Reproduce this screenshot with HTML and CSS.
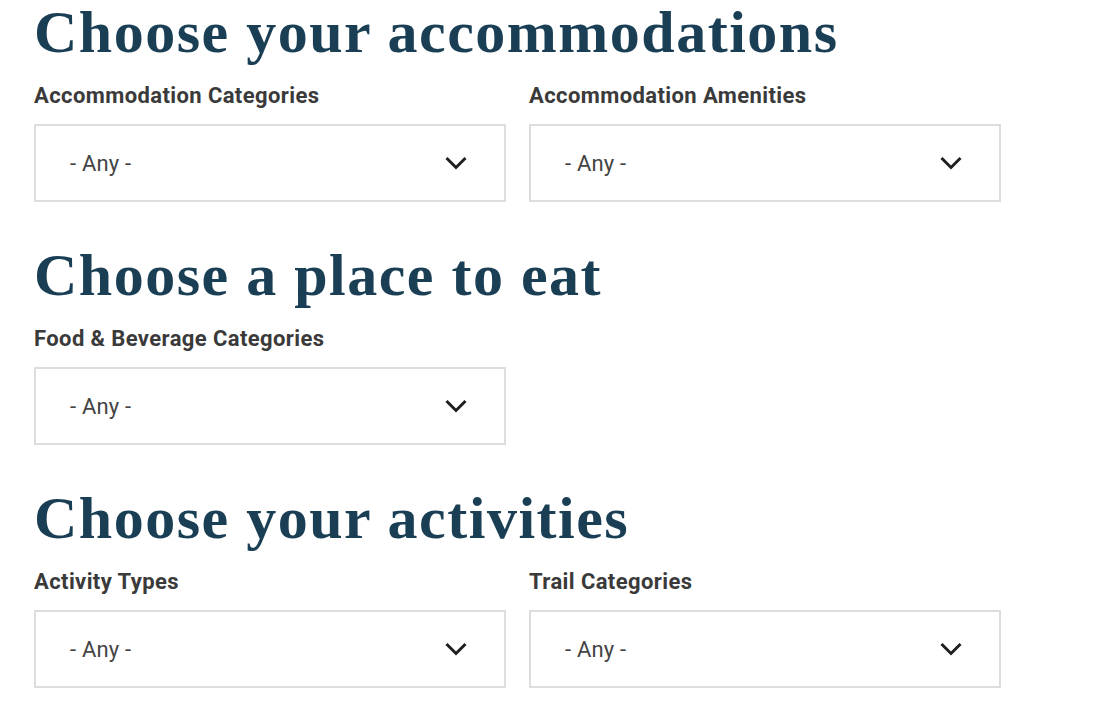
FILE: index.html
```html
<!DOCTYPE html>
<html lang="en">
<head>
  <meta charset="UTF-8">
  <meta name="viewport" content="width=device-width, initial-scale=1.0">
  <title>Plan your trip</title>
  <link rel="stylesheet" href="styles.css">
</head>
<body>
  <main class="filters">
    <section class="filter-group">
      <h2 class="group-title">Choose your accommodations</h2>
      <div class="field-row">
        <div class="field">
          <label class="field-label">Accommodation Categories</label>
          <div class="select-box">
            <span>- Any -</span>
            <svg class="chevron" width="24" height="14" viewBox="0 0 24 14"><path d="M2.5 2 L12 11.5 L21.5 2" fill="none" stroke="#1f1f1f" stroke-width="3"/></svg>
          </div>
        </div>
        <div class="field">
          <label class="field-label">Accommodation Amenities</label>
          <div class="select-box">
            <span>- Any -</span>
            <svg class="chevron" width="24" height="14" viewBox="0 0 24 14"><path d="M2.5 2 L12 11.5 L21.5 2" fill="none" stroke="#1f1f1f" stroke-width="3"/></svg>
          </div>
        </div>
      </div>
    </section>

    <section class="filter-group">
      <h2 class="group-title">Choose a place to eat</h2>
      <div class="field-row">
        <div class="field">
          <label class="field-label">Food &amp; Beverage Categories</label>
          <div class="select-box">
            <span>- Any -</span>
            <svg class="chevron" width="24" height="14" viewBox="0 0 24 14"><path d="M2.5 2 L12 11.5 L21.5 2" fill="none" stroke="#1f1f1f" stroke-width="3"/></svg>
          </div>
        </div>
      </div>
    </section>

    <section class="filter-group">
      <h2 class="group-title">Choose your activities</h2>
      <div class="field-row">
        <div class="field">
          <label class="field-label">Activity Types</label>
          <div class="select-box">
            <span>- Any -</span>
            <svg class="chevron" width="24" height="14" viewBox="0 0 24 14"><path d="M2.5 2 L12 11.5 L21.5 2" fill="none" stroke="#1f1f1f" stroke-width="3"/></svg>
          </div>
        </div>
        <div class="field">
          <label class="field-label">Trail Categories</label>
          <div class="select-box">
            <span>- Any -</span>
            <svg class="chevron" width="24" height="14" viewBox="0 0 24 14"><path d="M2.5 2 L12 11.5 L21.5 2" fill="none" stroke="#1f1f1f" stroke-width="3"/></svg>
          </div>
        </div>
      </div>
    </section>
  </main>
</body>
</html>
```

FILE: styles.css
```css
body {
  margin: 0;
  padding: 0;
  background-color: #fff;
  font-family: Roboto, "Liberation Sans", sans-serif;
}
.filters {
  padding: 0 34px;
}
.filter-group {
  margin-bottom: 41px;
}
.group-title {
  margin: 0;
  font-family: "Liberation Serif", "DejaVu Serif", serif;
  font-size: 60px;
  line-height: 64px;
  font-weight: bold;
  letter-spacing: 1.5px;
  color: #1a3f55;
}
.field-row {
  display: grid;
  grid-template-columns: 472px 472px;
  column-gap: 23px;
  margin-top: 20px;
}
.field-label {
  display: block;
  font-size: 22px;
  line-height: 24px;
  font-weight: 700;
  letter-spacing: 0.4px;
  color: #3a3a3a;
  margin-bottom: 16px;
}
.select-box {
  height: 78px;
  box-sizing: border-box;
  border: 2px solid #dddddd;
  display: flex;
  align-items: center;
  justify-content: space-between;
  padding: 0 36px 0 34px;
  font-size: 22px;
  letter-spacing: 0.2px;
  color: #444;
}
.chevron {
  display: block;
}
```
